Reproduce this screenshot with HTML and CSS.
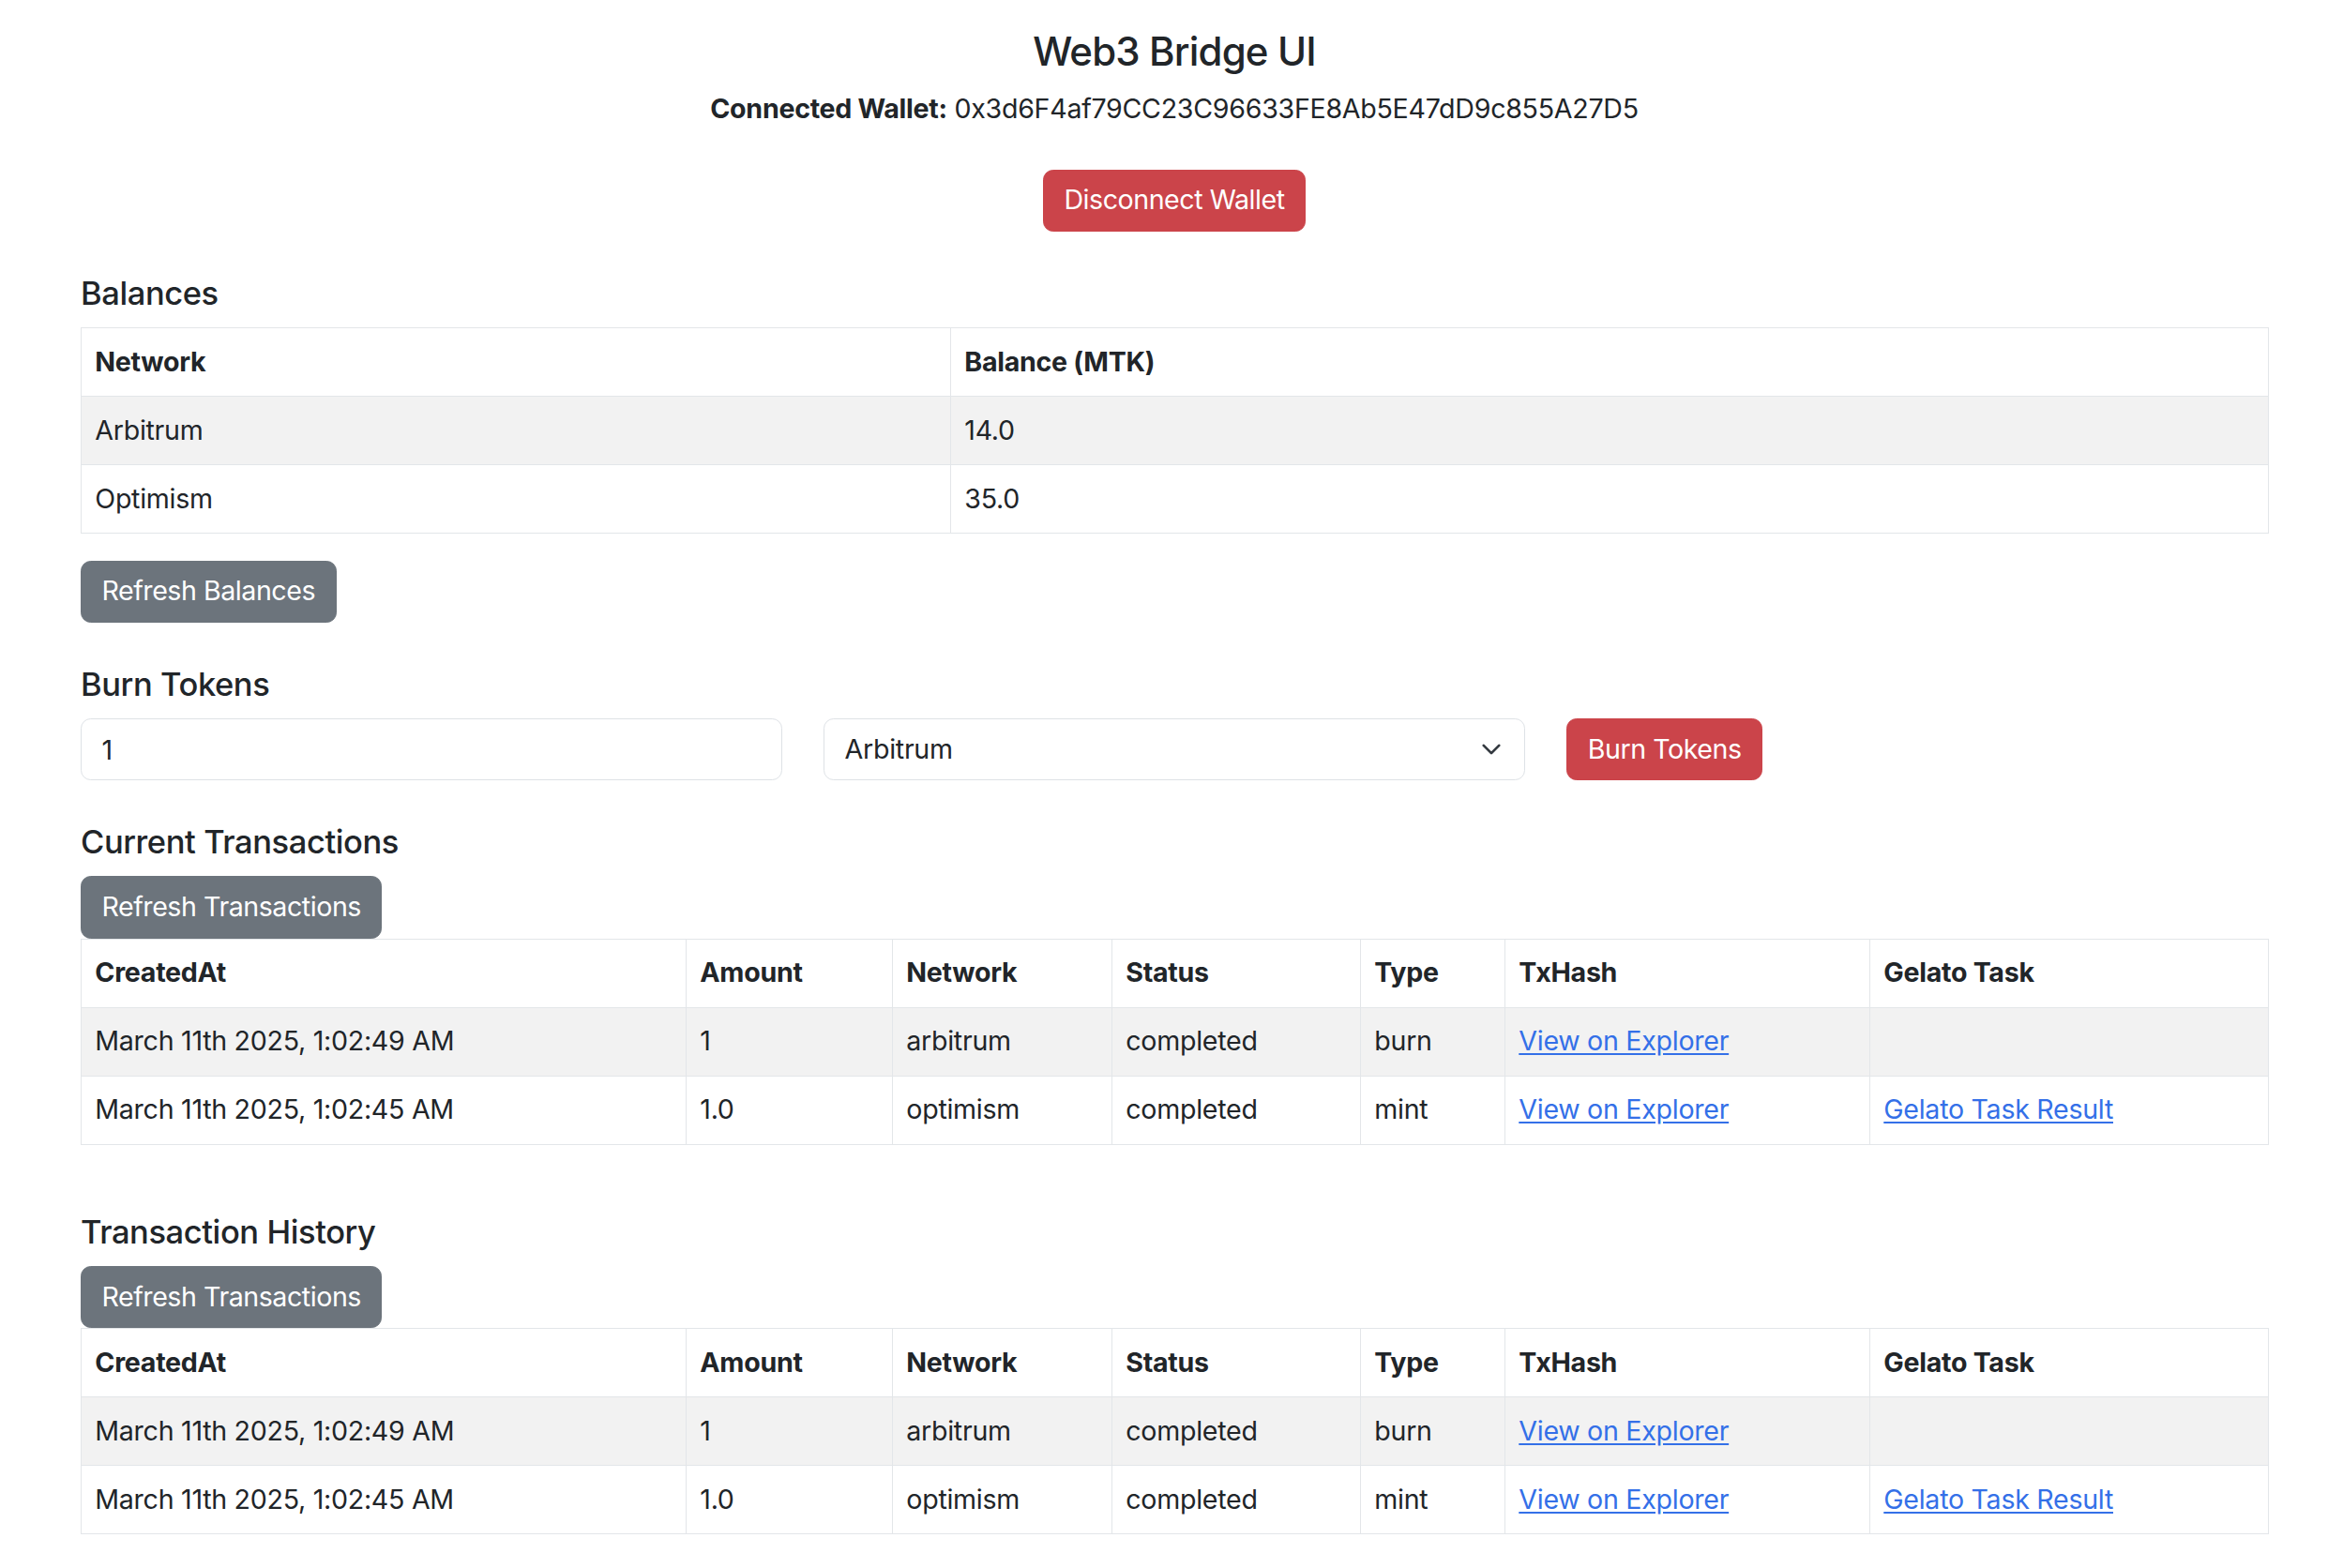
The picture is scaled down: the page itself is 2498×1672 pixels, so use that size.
FILE: index.html
```html
<!DOCTYPE html>
<html lang="en">
<head>
<meta charset="utf-8">
<title>Web3 Bridge UI</title>
<link rel="stylesheet" href="styles.css">
</head>
<body>
<div class="container">
  <h1 class="title">Web3 Bridge UI</h1>
  <p class="wallet"><strong>Connected Wallet:</strong> 0x3d6F4af79CC23C96633FE8Ab5E47dD9c855A27D5</p>
  <div class="center">
    <button class="btn btn-danger">Disconnect Wallet</button>
  </div>

  <h5 class="section-title balances-title">Balances</h5>
  <table class="table balances">
    <thead>
      <tr><th class="bc1">Network</th><th class="bc2">Balance (MTK)</th></tr>
    </thead>
    <tbody>
      <tr class="striped"><td>Arbitrum</td><td>14.0</td></tr>
      <tr><td>Optimism</td><td>35.0</td></tr>
    </tbody>
  </table>
  <button class="btn btn-secondary">Refresh Balances</button>

  <h5 class="section-title burn-title">Burn Tokens</h5>
  <div class="burn-row">
    <div class="col"><input class="form-control" type="text" value="1"></div>
    <div class="col">
      <div class="select-wrap">
        <select class="form-select"><option>Arbitrum</option><option>Optimism</option></select>
        <svg class="chevron" viewBox="0 0 16 16" width="22" height="22"><path d="m2 5 6 6 6-6" fill="none" stroke="#343a40" stroke-width="2" stroke-linecap="round" stroke-linejoin="round"/></svg>
      </div>
    </div>
    <div class="col"><button class="btn btn-danger">Burn Tokens</button></div>
  </div>

  <h5 class="section-title current">Current Transactions</h5>
  <button class="btn btn-secondary">Refresh Transactions</button>
  <table class="table tx">
    <thead>
      <tr><th class="c1">CreatedAt</th><th class="c2">Amount</th><th class="c3">Network</th><th class="c4">Status</th><th class="c5">Type</th><th class="c6">TxHash</th><th class="c7">Gelato Task</th></tr>
    </thead>
    <tbody>
      <tr class="striped"><td>March 11th 2025, 1:02:49 AM</td><td>1</td><td>arbitrum</td><td>completed</td><td>burn</td><td><a href="#">View on Explorer</a></td><td></td></tr>
      <tr><td>March 11th 2025, 1:02:45 AM</td><td>1.0</td><td>optimism</td><td>completed</td><td>mint</td><td><a href="#">View on Explorer</a></td><td><a href="#">Gelato Task Result</a></td></tr>
    </tbody>
  </table>

  <h5 class="section-title history">Transaction History</h5>
  <button class="btn btn-secondary">Refresh Transactions</button>
  <table class="table tx">
    <thead>
      <tr><th class="c1">CreatedAt</th><th class="c2">Amount</th><th class="c3">Network</th><th class="c4">Status</th><th class="c5">Type</th><th class="c6">TxHash</th><th class="c7">Gelato Task</th></tr>
    </thead>
    <tbody>
      <tr class="striped"><td>March 11th 2025, 1:02:49 AM</td><td>1</td><td>arbitrum</td><td>completed</td><td>burn</td><td><a href="#">View on Explorer</a></td><td></td></tr>
      <tr><td>March 11th 2025, 1:02:45 AM</td><td>1.0</td><td>optimism</td><td>completed</td><td>mint</td><td><a href="#">View on Explorer</a></td><td><a href="#">Gelato Task Result</a></td></tr>
    </tbody>
  </table>
</div>
</body>
</html>
```

FILE: styles.css
```css
* { box-sizing: border-box; }

html, body {
  margin: 0;
  padding: 0;
  background: #ffffff;
}

body {
  font-family: Inter, "Noto Sans", "Liberation Sans", sans-serif;
  font-size: 28.6px;
  line-height: 1.5;
  letter-spacing: -0.01em;
  color: #212529;
}

.container {
  width: 2332px;
  margin-left: 86px;
  padding-top: 30px;
  padding-bottom: 30px;
}

.title {
  margin: 0 0 14.3px 0;
  font-size: 42px;
  font-weight: 500;
  line-height: 1.2;
  letter-spacing: -0.02em;
  text-align: center;
}

.wallet {
  margin: 0 0 43px 0;
  text-align: center;
}

.wallet strong {
  font-weight: 700;
}

.center {
  text-align: center;
}

.btn {
  display: inline-block;
  font-family: inherit;
  font-size: 28.6px;
  line-height: 1.5;
  font-weight: 400;
  letter-spacing: -0.016em;
  padding: 10.7px 21.45px;
  border: 1.8px solid transparent;
  border-radius: 10.7px;
  color: #ffffff;
  cursor: pointer;
}

.btn-danger {
  background: #cb444a;
  border-color: #cb444a;
}

.btn-secondary {
  background: #6c747c;
  border-color: #6c747c;
}

.section-title {
  margin: 43px 0 14.3px 0;
  font-size: 34.5px;
  font-weight: 500;
  line-height: 1.24;
  letter-spacing: -0.012em;
}

.section-title.balances-title {
  margin-top: 45px;
}

.section-title.burn-title {
  margin-top: 45px;
}

.section-title.current {
  margin-top: 45px;
}

.section-title.history {
  margin-top: 72px;
}

.table {
  width: 100%;
  border-collapse: collapse;
  table-layout: fixed;
  margin-bottom: 28.6px;
  border: 1px solid #dee2e6;
}

.table th,
.table td {
  padding: 14.6px 14.3px;
  border: 1px solid #e3e6e9;
  text-align: left;
  vertical-align: top;
  white-space: nowrap;
}

.table th {
  font-weight: 700;
}

.table tr {
  border-bottom: 1px solid #dee2e6;
}

.table .striped td {
  background: #f2f2f2;
}

.table a {
  color: #3470e8;
  text-decoration: underline;
  text-underline-offset: 3px;
}

.balances .bc1 { width: 927px; }
.balances .bc2 { width: 1405px; }

.tx .c1 { width: 645px; }
.tx .c2 { width: 220px; }
.tx .c3 { width: 234px; }
.tx .c4 { width: 265px; }
.tx .c5 { width: 154px; }
.tx .c6 { width: 389px; }
.tx .c7 { width: 425px; }

.burn-row {
  display: grid;
  grid-template-columns: repeat(3, 1fr);
  column-gap: 44.5px;
}

.form-control,
.form-select {
  display: block;
  width: 100%;
  font-family: inherit;
  font-size: 28.6px;
  line-height: 1.5;
  letter-spacing: -0.01em;
  color: #212529;
  background: #ffffff;
  border: 1.5px solid #dee2e6;
  border-radius: 10.7px;
  padding: 10.2px 21.45px;
  height: 66px;
  outline: none;
  -webkit-appearance: none;
  appearance: none;
}

.form-select {
  padding-right: 64px;
}

.select-wrap {
  position: relative;
}

.chevron {
  position: absolute;
  right: 25px;
  top: 22px;
  pointer-events: none;
}
```
